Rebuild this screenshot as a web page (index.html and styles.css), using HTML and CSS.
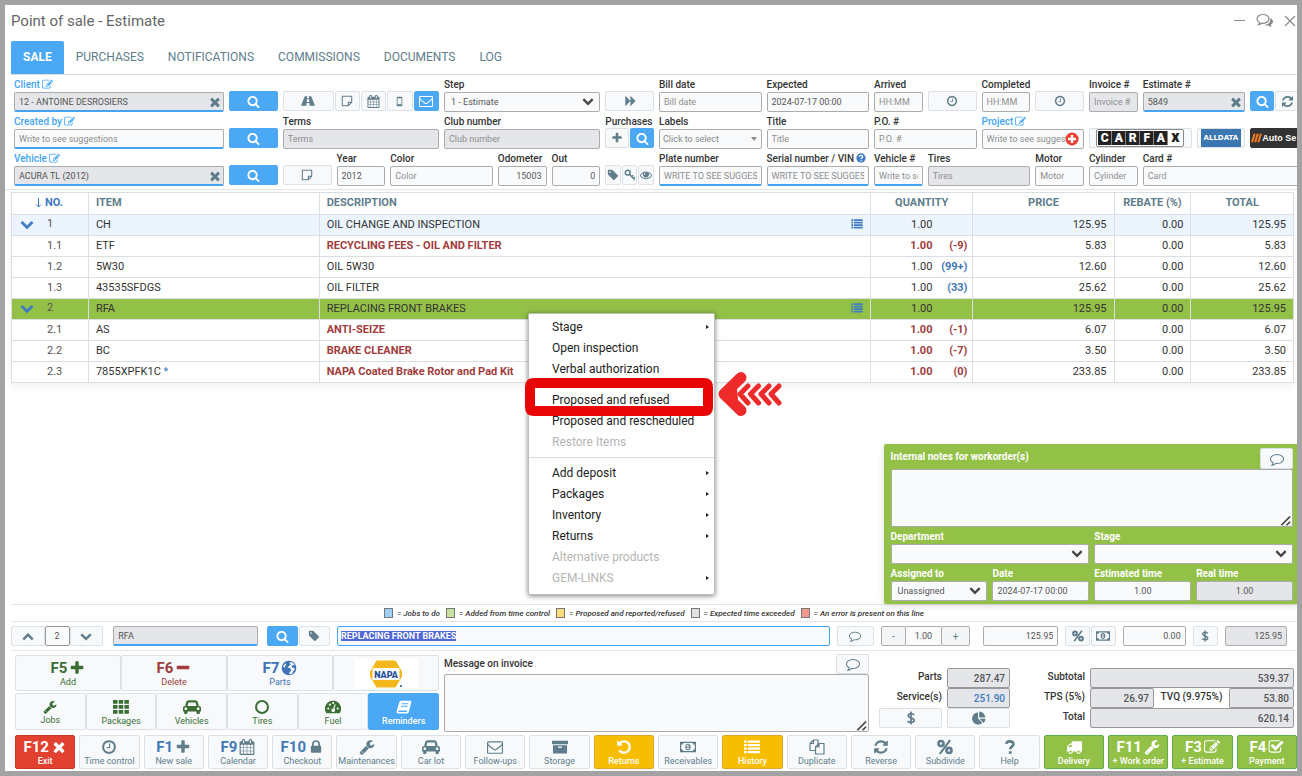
FILE: index.html
```html
<!DOCTYPE html>
<html lang="en">
<head>
<meta charset="utf-8">
<title>Point of sale - Estimate</title>
<link rel="stylesheet" href="styles.css">
</head>
<body>
<svg class="sprite" aria-hidden="true">
<symbol id="search" viewBox="0 0 1792 1792"><path d="M1216 832q0-185-131.5-316.5t-316.5-131.5-316.5 131.5-131.5 316.5 131.5 316.5 316.5 131.5 316.5-131.5 131.5-316.5zm512 832q0 52-38 90t-90 38q-54 0-90-38l-343-342q-179 124-399 124-143 0-273.5-55.5t-225-150-150-225-55.5-273.5 55.5-273.5 150-225 225-150 273.5-55.5 273.5 55.5 225 150 150 225 55.5 273.5q0 220-124 399l343 343q37 37 37 90z"/></symbol>
<symbol id="plus" viewBox="0 0 1792 1792"><path d="M1600 736v192q0 40-28 68t-68 28h-416v416q0 40-28 68t-68 28h-192q-40 0-68-28t-28-68v-416h-416q-40 0-68-28t-28-68v-192q0-40 28-68t68-28h416v-416q0-40 28-68t68-28h192q40 0 68 28t28 68v416h416q40 0 68 28t28 68z"/></symbol>
<symbol id="minus" viewBox="0 0 1792 1792"><path d="M1600 736v192q0 40-28 68t-68 28h-1216q-40 0-68-28t-28-68v-192q0-40 28-68t68-28h1216q40 0 68 28t28 68z"/></symbol>
<symbol id="times" viewBox="0 0 1792 1792"><path d="M1490 1322q0 40-28 68l-136 136q-28 28-68 28t-68-28l-294-294-294 294q-28 28-68 28t-68-28l-136-136q-28-28-28-68t28-68l294-294-294-294q-28-28-28-68t28-68l136-136q28-28 68-28t68 28l294 294 294-294q28-28 68-28t68 28l136 136q28 28 28 68t-28 68l-294 294 294 294q28 28 28 68z"/></symbol>
<symbol id="down" viewBox="0 0 1792 1792"><path d="M1683 808l-742 741q-19 19-45 19t-45-19l-742-741q-19-19-19-45.5t19-45.5l166-165q19-19 45-19t45 19l531 531 531-531q19-19 45-19t45 19l166 165q19 19 19 45.5t-19 45.5z"/></symbol>
<symbol id="up" viewBox="0 0 1792 1792"><path d="M1683 1331l-166 165q-19 19-45 19t-45-19l-531-531-531 531q-19 19-45 19t-45-19l-166-165q-19-19-19-45.5t19-45.5l742-741q19-19 45-19t45 19l742 741q19 19 19 45.5t-19 45.5z"/></symbol>
<symbol id="caret" viewBox="0 0 12 12"><path d="M2 3.500L6 7.500l4-4" fill="none" stroke="currentColor" stroke-width="2"/></symbol>
<symbol id="clock" viewBox="0 0 1792 1792"><path d="M1024 544v448q0 14-9 23t-23 9h-320q-14 0-23-9t-9-23v-64q0-14 9-23t23-9h224v-352q0-14 9-23t23-9h64q14 0 23 9t9 23zm416 352q0-148-73-273t-198-198-273-73-273 73-198 198-73 273 73 273 198 198 273 73 273-73 198-198 73-273zm224 0q0 209-103 385.500t-279.500 279.500-385.500 103-385.500-103-279.500-279.500-103-385.500 103-385.500 279.500-279.500 385.500-103 385.500 103 279.500 279.500 103 385.500z"/></symbol>
<symbol id="wrench" viewBox="0 0 1792 1792"><path d="M448 1472q0-26-19-45t-45-19-45 19-19 45 19 45 45 19 45-19 19-45zm644-420l-682 682q-37 37-90 37-52 0-91-37l-106-108q-38-36-38-90 0-53 38-91l681-681q39 98 114.500 173.500t173.500 114.500zm634-435q0 39-23 106-47 134-164.500 217.500t-258.500 83.500q-185 0-316.500-131.500t-131.500-316.500 131.500-316.500 316.500-131.500q58 0 121.500 16.500t107.500 46.500q16 11 16 28t-16 28l-293 169v224l193 107q5-3 79-48.500t135.500-81 70.500-35.500q15 0 23.500 10t8.500 25z"/></symbol>
<symbol id="grid" viewBox="0 0 16 14"><path d="M0 0h4.500v3.800H0zM5.700 0h4.500v3.800H5.700zM11.400 0h4.500v3.800h-4.500zM0 5h4.500v3.800H0zM5.700 5h4.500v3.800H5.700zM11.400 5h4.500v3.800h-4.500zM0 10h4.500v3.800H0zM5.700 10h4.500v3.800H5.700zM11.400 10h4.500v3.800h-4.500z"/></symbol>
<symbol id="lock" viewBox="0 0 1792 1792"><path d="M640 768h512v-192q0-106-75-181t-181-75-181 75-75 181v192zm832 96v576q0 40-28 68t-68 28h-960q-40 0-68-28t-28-68v-576q0-40 28-68t68-28h32v-192q0-184 132-316t316-132 316 132 132 316v192h32q40 0 68 28t28 68z"/></symbol>
<symbol id="mail" viewBox="0 0 1792 1792"><path d="M1664 1504v-768q-32 36-69 66-268 206-426 338-51 43-83 67t-86.500 48.500-102.500 24.500h-2q-48 0-102.500-24.500t-86.500-48.500-83-67q-158-132-426-338-37-30-69-66v768q0 13 9.500 22.500t22.500 9.500h1472q13 0 22.500-9.500t9.500-22.500zm0-1051v-24.500l-.500-13-3-12.500-5.500-9-9-7.500-14-2.500h-1472q-13 0-22.500 9.500t-9.500 22.500q0 168 147 284 193 152 401 317 6 5 35 29.500t46 37.500 44.500 31.500 50.500 27.500 43 9h2q20 0 43-9t50.500-27.500 44.500-31.500 46-37.500 35-29.500q208-165 401-317 54-43 100.500-115.500t46.500-131.500zm128-37v1088q0 66-47 113t-113 47h-1472q-66 0-113-47t-47-113v-1088q0-66 47-113t113-47h1472q66 0 113 47t47 113z"/></symbol>
<symbol id="refresh" viewBox="0 0 1792 1792"><path d="M1639 1056q0 5-1 7-64 268-268 434.500t-478 166.500q-146 0-282.500-55t-243.500-157l-129 129q-19 19-45 19t-45-19-19-45v-448q0-26 19-45t45-19h448q26 0 45 19t19 45-19 45l-137 137q71 66 161 102t187 36q134 0 250-65t186-179q11-17 53-117 8-23 30-23h192q13 0 22.500 9.500t9.500 22.500zm25-800v448q0 26-19 45t-45 19h-448q-26 0-45-19t-19-45 19-45l138-138q-148-137-349-137-134 0-250 65t-186 179q-11 17-53 117-8 23-30 23h-199q-13 0-22.500-9.500t-9.500-22.500v-7q65-268 270-434.500t480-166.500q146 0 284 55.500t245 156.500l130-129q19-19 45-19t45 19 19 45z"/></symbol>
<symbol id="undo" viewBox="0 0 1792 1792"><path d="M1664 896q0 156-61 298t-164 245-245 164-298 61q-172 0-327-72.500t-264-204.500q-7-10-6.500-22.500t8.500-20.500l137-138q10-9 25-9 16 2 23 12 73 95 179 147t225 52q104 0 198.500-40.500t163.500-109.500 109.500-163.500 40.500-198.500-40.500-198.500-109.500-163.500-163.500-109.500-198.500-40.500q-98 0-188 35.500t-160 101.500l137 138q31 30 14 69-17 40-59 40h-448q-26 0-45-19t-19-45v-448q0-42 40-59 39-17 69 14l130 129q107-101 244.500-156.500t284.500-55.500q156 0 298 61t245 164 164 245 61 298z"/></symbol>
<symbol id="edit" viewBox="0 0 1792 1792"><path d="M888 1184l116-116-152-152-116 116v56h96v96h56zm440-720q-16-16-33 1l-350 350q-17 17-1 33t33-1l350-350q17-17 1-33zm80 594v190q0 119-84.500 203.500t-203.500 84.500h-832q-119 0-203.500-84.500t-84.500-203.500v-832q0-119 84.500-203.500t203.500-84.500h832q63 0 117 25 15 7 18 23 3 17-9 29l-49 49q-14 14-32 8-23-6-45-6h-832q-66 0-113 47t-47 113v832q0 66 47 113t113 47h832q66 0 113-47t47-113v-126q0-13 9-22l64-64q15-15 35-7t20 29zm-96-738l288 288-672 672h-288v-288zm444 132l-92 92-288-288 92-92q28-28 68-28t68 28l152 152q28 28 28 68t-28 68z"/></symbol>
<symbol id="check" viewBox="0 0 1792 1792"><path d="M1472 930v318q0 119-84.500 203.500t-203.500 84.500h-832q-119 0-203.500-84.500t-84.500-203.500v-832q0-119 84.500-203.500t203.500-84.500h832q63 0 117 25 15 7 18 23 3 17-9 29l-49 49q-10 10-23 10-3 0-9-2-23-6-45-6h-832q-66 0-113 47t-47 113v832q0 66 47 113t113 47h832q66 0 113-47t47-113v-254q0-13 9-22l64-64q10-10 23-10 6 0 12 3 20 8 20 29zm231-489l-814 814q-24 24-57 24t-57-24l-430-430q-24-24-24-57t24-57l110-110q24-24 57-24t57 24l263 263 647-647q24-24 57-24t57 24l110 110q24 24 24 57t-24 57z"/></symbol>
<symbol id="tag" viewBox="0 0 1792 1792"><path d="M576 448q0-53-37.500-90.500t-90.500-37.500-90.500 37.500-37.500 90.500 37.500 90.500 90.500 37.500 90.500-37.500 37.500-90.500zm1067 576q0 53-37 90l-491 492q-39 37-91 37-53 0-90-37l-715-716q-38-37-64.500-101t-26.500-117v-416q0-52 38-90t90-38h416q53 0 117 26.500t102 64.500l715 714q37 39 37 91z"/></symbol>
<symbol id="truck" viewBox="0 0 1792 1792"><path d="M640 1408q0-52-38-90t-90-38-90 38-38 90 38 90 90 38 90-38 38-90zm-384-512h384v-256h-158q-13 0-22 9l-195 195q-9 9-9 22v30zm1280 512q0-52-38-90t-90-38-90 38-38 90 38 90 90 38 90-38 38-90zm256-1088v1024q0 15-4 26.500t-13.500 18.500-16.500 11.500-23.500 6-22.500 2-25.500 0-22.500-.500q0 106-75 181t-181 75-181-75-75-181h-384q0 106-75 181t-181 75-181-75-75-181h-64q-3 0-22.500.500t-25.500 0-22.500-2-23.500-6-16.500-11.500-13.500-18.500-4-26.500q0-26 19-45t45-19v-320q0-8-.500-35t0-38 2.500-34.500 6.500-37 14-30.500 22.500-30l198-198q19-19 50.500-32t58.500-13h160v-192q0-26 19-45t45-19h1024q26 0 45 19t19 45z"/></symbol>
<symbol id="car" viewBox="0 0 2048 1792"><path d="M480 1088q0-66-47-113t-113-47-113 47-47 113 47 113 113 47 113-47 47-113zm36-320h1016l-89-357q-2-8-14-17.500t-21-9.500h-768q-9 0-21 9.500t-14 17.500zm1372 320q0-66-47-113t-113-47-113 47-47 113 47 113 113 47 113-47 47-113zm160-96v384q0 14-9 23t-23 9h-96v128q0 80-56 136t-136 56-136-56-56-136v-128h-1024v128q0 80-56 136t-136 56-136-56-56-136v-128h-96q-14 0-23-9t-9-23v-384q0-93 65.500-158.500t158.500-65.500h28l105-419q23-94 104-157.500t179-63.500h768q98 0 179 63.500t104 157.500l105 419h28q93 0 158.500 65.500t65.500 158.500z"/></symbol>
<symbol id="eye" viewBox="0 0 1792 1792"><path d="M1664 960q-152-236-381-353 61 104 61 225 0 185-131.500 316.500t-316.500 131.500-316.500-131.500-131.500-316.500q0-121 61-225-229 117-381 353 133 205 333.500 326.500t434.500 121.500 434.500-121.500 333.500-326.500zm-720-384q0-20-14-34t-34-14q-125 0-214.500 89.500t-89.500 214.500q0 20 14 34t34 14 34-14 14-34q0-86 61-147t147-61q20 0 34-14t14-34zm848 384q0 34-20 69-140 230-376.500 368.500t-499.500 138.500-499.500-139-376.500-368q-20-35-20-69t20-69q140-229 376.500-368t499.500-139 499.500 139 376.500 368q20 35 20 69z"/></symbol>
<symbol id="comment" viewBox="0 0 1792 1792"><path d="M896 384q-204 0-381.500 69.500t-282 187.500-104.500 255q0 112 71.500 213.500t201.500 175.500l87 50-27 96q-24 91-70 172 152-63 275-171l43-38 57 6q69 8 130 8 204 0 381.500-69.500t282-187.500 104.500-255-104.500-255-282-187.500-381.500-69.500zm896 512q0 174-120 321.500t-326 233-450 85.500q-70 0-145-8-198 175-460 242-49 14-114 22h-5q-15 0-27-10.500t-16-27.500v-1q-3-4-.500-12t2-10 4.500-9.500l6-9 7-8.500 8-9q7-8 31-34.500t34.500-38 31-39.500 32.500-51 27-59 26-76q-157-89-247.500-220t-90.500-281q0-130 71-248.500t191-204.500 286-136.500 348-50.500 348 50.500 286 136.500 191 204.500 71 248.500z"/></symbol>
<symbol id="calendar" viewBox="0 0 1792 1792"><path d="M192 1664h288v-288h-288v288zm352 0h320v-288h-320v288zm-352-352h288v-320h-288v320zm352 0h320v-320h-320v320zm-352-384h288v-288h-288v288zm736 736h320v-288h-320v288zm-384-736h320v-288h-320v288zm768 736h288v-288h-288v288zm-384-352h320v-320h-320v320zm-352-864v-288q0-13-9.500-22.500t-22.500-9.500h-64q-13 0-22.500 9.500t-9.500 22.500v288q0 13 9.500 22.500t22.500 9.500h64q13 0 22.500-9.500t9.500-22.500zm736 864h288v-320h-288v320zm-384-384h320v-288h-320v288zm384 0h288v-288h-288v288zm32-480v-288q0-13-9.500-22.500t-22.500-9.500h-64q-13 0-22.500 9.500t-9.500 22.500v288q0 13 9.500 22.500t22.500 9.500h64q13 0 22.500-9.500t9.500-22.500zm384-64v1280q0 52-38 90t-90 38h-1408q-52 0-90-38t-38-90v-1280q0-52 38-90t90-38h128v-96q0-66 47-113t113-47h64q66 0 113 47t47 113v96h384v-96q0-66 47-113t113-47h64q66 0 113 47t47 113v96h128q52 0 90 38t38 90z"/></symbol>
<symbol id="road" viewBox="0 0 16 14"><path fill-rule="evenodd" d="M4.300 1.500H7l-.2 2.300h2.400L9 1.500h2.700L16 12.500H9.800l-.2-3.300H6.400l-.2 3.300H0zM6.700 5l-.2 3h3l-.2-3z"/></symbol>
<symbol id="note" viewBox="0 0 14 14"><path d="M1.500 1.500h11v7l-4 4h-7zM12.500 8.500h-4v4" fill="none" stroke="currentColor" stroke-width="1.200" stroke-linejoin="round"/></symbol>
<symbol id="phone" viewBox="0 0 14 14"><path fill-rule="evenodd" d="M4.500 1h5q1 0 1 1v10q0 1-1 1h-5q-1 0-1-1V2q0-1 1-1zM4.500 3v7.500h5V3z"/></symbol>
<symbol id="forward" viewBox="0 0 14 14"><path d="M1.500 1l6 6-6 6zM7.500 1l6 6-6 6z"/></symbol>
<symbol id="key" viewBox="0 0 14 14"><path d="M6 5.800l6.500 6.700M9 9l1.600-1.600M11 11l1.600-1.600" fill="none" stroke="currentColor" stroke-width="1.600"/><circle cx="4.300" cy="4.300" r="2.800" fill="none" stroke="currentColor" stroke-width="1.800"/></symbol>
<symbol id="comments" viewBox="0 0 18 16"><path d="M7 1.500c3.300 0 6 1.900 6 4.400s-2.700 4.400-6 4.400l-1.300-.1c-1 .9-2 1.300-3.200 1.500.6-.6 1-1.200 1.100-2.200C2 8.700 1 7.400 1 5.900c0-2.500 2.700-4.400 6-4.400z" fill="none" stroke="currentColor" stroke-width="1.200"/><path d="M14.200 5c1.700.8 2.800 2 2.800 3.500 0 1.400-.9 2.500-2.300 3.300.1 1 .5 1.600 1.200 2.200-1.400-.1-2.500-.6-3.500-1.500-1.500.2-2.700 0-4-.6 3.700-.2 6.600-2.600 5.800-6.900z"/></symbol>
<symbol id="money" viewBox="0 0 18 14"><path fill-rule="evenodd" d="M0 1h18v12H0zM3.800 2.500q0 2-2.400 2v5q2.400 0 2.400 2h10.400q0-2 2.400-2v-5q-2.400 0-2.400-2z"/><path fill-rule="evenodd" d="M9 3.300c2 0 3 1.700 3 3.700s-1 3.700-3 3.700S6 9 6 7s1-3.700 3-3.700zM8.400 4.600L7.300 5.700l.6.6.5-.4v2.500h-.8v.8h2.800v-.8h-.8V4.600z"/></symbol>
<symbol id="percent" viewBox="0 0 14 14"><path d="M11.500 1L2.500 13" stroke="currentColor" stroke-width="1.900"/><g fill="none" stroke="currentColor" stroke-width="2.300"><circle cx="3.500" cy="4" r="2.200"/><circle cx="10.500" cy="10" r="2.200"/></g></symbol>
<symbol id="dollar" viewBox="0 0 14 14"><path d="M10.300 3.800C8.500 2.300 4.200 2.200 4.200 4.700c0 2.800 6 1.700 6 4.600 0 2.600-4.500 2.500-6.600.9M7 .5v13" fill="none" stroke="currentColor" stroke-width="1.700"/></symbol>
<symbol id="pie" viewBox="0 0 14 14"><path d="M6 1.500V7.500L10.300 11.800A6 6 0 1 1 6 1.500zM7.200.5a6 6 0 0 1 6 6h-6zM7.500 7.700h6a6 6 0 0 1-1.800 4.200z"/></symbol>
<symbol id="globe" viewBox="0 0 14 14"><path fill-rule="evenodd" d="M7 .6a6.400 6.400 0 1 1 0 12.800A6.400 6.400 0 0 1 7 .6zM8.300 1.700L7.400 3l1.200.9L7 5.300 5.600 6.400l2.300.9 1.200 1.500-1.300 1.700-.9 2 2.800-.5 1-2.300 1.300-1.200-.4-1.600-1.900-.4-.6-1.300 1.700-.9 1.400.8L10.700 2.600zM3.800 2.900L2 5l.2 1.300 1.300.4-.3-1.300 1.400-1z"/></symbol>
<symbol id="gauge" viewBox="0 0 16 14"><path fill-rule="evenodd" d="M8 .8a8 8 0 0 1 6.700 12.400H1.300A8 8 0 0 1 8 .8zM2.200 8.500a1.100 1.100 0 1 0 2.200 0 1.100 1.100 0 0 0-2.200 0zM3.800 4.700a1.100 1.100 0 1 0 2.200 0 1.100 1.100 0 0 0-2.200 0zM11.600 8.500a1.100 1.100 0 1 0 2.200 0 1.100 1.100 0 0 0-2.200 0zM7 3a1.100 1.100 0 1 0 2.200 0A1.100 1.100 0 0 0 7 3zM9.700 4.200L8.200 8.400a1.900 1.900 0 1 0 1.200.4l1.400-4.200z"/></symbol>
<symbol id="book" viewBox="0 0 16 14"><path fill-rule="evenodd" d="M5 .8h9.500q1.200 0 .8 1.400L12.800 12q-.4 1.500-1.800 1.500H2.300C.8 13.500.2 12.300.6 11.200L3.400 2Q3.800.8 5 .8zM6 3.300l-.3 1h6.400l.3-1zM5.300 5.800l-.3 1h6.400l.3-1zM2.300 11.200q0 .9.8.9h7.600l.5-1.600H3.200q-.8 0-.9.700z"/></symbol>
<symbol id="archive" viewBox="0 0 16 14"><path fill-rule="evenodd" d="M0 .8h16v3.500H0zM1 5.300h14v8.200H1zM6 6.500v1.300h4V6.500z"/></symbol>
<symbol id="list" viewBox="0 0 16 14"><path d="M0 .5h2.700v2.300H0zM3.800.5H16v2.300H3.800zM0 4h2.700v2.300H0zM3.800 4H16v2.300H3.800zM0 7.500h2.700v2.300H0zM3.800 7.500H16v2.300H3.800zM0 11h2.700v2.300H0zM3.800 11H16v2.300H3.800z"/></symbol>
<symbol id="copy" viewBox="0 0 16 16"><g fill="none" stroke="currentColor" stroke-width="1.200" stroke-linejoin="round"><path d="M6.500 11.500H1v-7L4.500 1H9v4M4.500 1v3.500H1"/><path d="M10 4.500h5V15H6.500V8zM10 4.500V8H6.500"/></g></symbol>
<symbol id="help" viewBox="0 0 14 14"><path d="M3.800 4.300C4 1.200 10.200 1.300 10 4.600 9.900 6.700 7.200 6.500 7.200 9" fill="none" stroke="currentColor" stroke-width="2.300"/><path d="M6 10.700h2.400V13H6z"/></symbol>
<symbol id="ring" viewBox="0 0 14 14"><circle cx="7" cy="7" r="5.200" fill="none" stroke="currentColor" stroke-width="1.800"/></symbol>
<symbol id="grip" viewBox="0 0 12 12"><path d="M2 10.500L9.500 3M6.500 10.500L9.500 7.500" fill="none" stroke="#444" stroke-width="1.500"/></symbol>
</svg>

<main class="window">
  <header class="titlebar">
    <h1>Point of sale - Estimate</h1>
    <div class="window-tools">
      <button aria-label="Minimize"><svg width="12" height="12"><path d="M0 5.500h11" stroke="currentColor"/></svg></button>
      <button aria-label="Chat"><svg class="i i18"><use href="#comments"/></svg></button>
      <button aria-label="Close"><svg width="13" height="12"><path d="M1 1l10 10M11 1L1 11" stroke="currentColor" stroke-width="1.200"/></svg></button>
    </div>
  </header>
  <nav class="tabs">
    <a class="active" href="#sale">SALE</a><a href="#purchases">PURCHASES</a><a href="#notifications">NOTIFICATIONS</a><a href="#commissions">COMMISSIONS</a><a href="#documents">DOCUMENTS</a><a href="#log">LOG</a>
  </nav>

  <form class="details">
    <div class="field s4"><label class="link" for="client">Client <svg class="i i11"><use href="#edit"/></svg></label><div class="combo"><input class="off under" id="client" value="12 - ANTOINE DESROSIERS"><button type="button" aria-label="Clear client"><svg class="i i14"><use href="#times"/></svg></button></div></div>
    <button type="button" class="btn blue" aria-label="Search client"><svg class="i i13"><use href="#search"/></svg></button>
    <div class="group s3 tools">
      <button type="button" class="btn" aria-label="Road test"><svg class="i i14"><use href="#road"/></svg></button>
      <button type="button" class="btn" aria-label="Note"><svg class="i"><use href="#note"/></svg></button>
      <button type="button" class="btn" aria-label="Calendar"><svg class="i i13"><use href="#calendar"/></svg></button>
      <button type="button" class="btn" aria-label="Mobile"><svg class="i i11"><use href="#phone"/></svg></button>
      <button type="button" class="btn blue" aria-label="Email"><svg class="i i14"><use href="#mail"/></svg></button>
    </div>
    <div class="field s3"><label for="step">Step</label><div class="select"><select id="step"><option>1 - Estimate</option></select><svg class="i i14"><use href="#caret"/></svg></div></div>
    <button type="button" class="btn" aria-label="Next step"><svg class="i"><use href="#forward"/></svg></button>
    <div class="field s2"><label for="bill">Bill date</label><input id="bill" placeholder="Bill date"></div>
    <div class="field s2"><label for="expected">Expected</label><input id="expected" value="2024-07-17 00:00"></div>
    <div class="field"><label for="arrived">Arrived</label><input id="arrived" placeholder="HH:MM"></div>
    <button type="button" class="btn" aria-label="Set arrival"><svg class="i"><use href="#clock"/></svg></button>
    <div class="field"><label for="completed">Completed</label><input id="completed" placeholder="HH:MM"></div>
    <button type="button" class="btn" aria-label="Set completion"><svg class="i"><use href="#clock"/></svg></button>
    <div class="field"><label for="invoice">Invoice #</label><input class="off" id="invoice" placeholder="Invoice #"></div>
    <div class="field s2"><label for="estimate">Estimate #</label><div class="combo"><input class="off under" id="estimate" value="5849"><button type="button" aria-label="Clear estimate"><svg class="i i14"><use href="#times"/></svg></button></div></div>
    <div class="group two"><button type="button" class="btn blue" aria-label="Search estimate"><svg class="i i13"><use href="#search"/></svg></button><button type="button" class="btn" aria-label="Refresh"><svg class="i i13"><use href="#refresh"/></svg></button></div>

    <div class="field s4"><label class="link" for="creator">Created by <svg class="i i11"><use href="#edit"/></svg></label><input class="under" id="creator" placeholder="Write to see suggestions"></div>
    <button type="button" class="btn blue" aria-label="Search creator"><svg class="i i13"><use href="#search"/></svg></button>
    <div class="field s3"><label for="terms">Terms</label><input class="off" id="terms" placeholder="Terms"></div>
    <div class="field s3"><label for="club">Club number</label><input class="off" id="club" placeholder="Club number"></div>
    <div class="field"><span class="label">Purchases</span><div class="group two"><button type="button" class="btn" aria-label="Add purchase"><svg class="i"><use href="#plus"/></svg></button><button type="button" class="btn blue" aria-label="Search purchases"><svg class="i i13"><use href="#search"/></svg></button></div></div>
    <div class="field s2"><label for="labels">Labels</label><div class="select tiny"><select id="labels"><option>Click to select</option></select><svg class="i" viewBox="0 0 12 12"><path d="M3 4h6L6 8z" fill="#8b8b8b"/></svg></div></div>
    <div class="field s2"><label for="title">Title</label><input id="title" placeholder="Title"></div>
    <div class="field s2"><label for="po">P.O. #</label><input id="po" placeholder="P.O. #"></div>
    <div class="field s2"><label class="link" for="project">Project <svg class="i i11"><use href="#edit"/></svg></label><div class="combo project"><input id="project" placeholder="Write to see suggestions"><button type="button" aria-label="Add project"><svg class="i i14" viewBox="0 0 14 14"><circle cx="7" cy="7" r="6.500" fill="#e8412f"/><path d="M7 3v8M3 7h8" stroke="#fff" stroke-width="2.500"/></svg></button></div></div>
    <button type="button" class="btn s2 carfax" aria-label="CARFAX"><span class="plate"><span>C</span><span>A</span><span>R</span><span>F</span><span>A</span><span class="x">x</span></span></button>
    <button type="button" class="btn alldata"><span>ALLDATA</span></button>
    <button type="button" class="btn autose"><svg width="11" height="10" viewBox="0 0 13 10"><path d="M0 10L3 0h2.500l-3 10zM3.700 10l3-10h2.500l-3 10zM7.400 10l3-10h2.500l-3 10z" fill="#f47b20"/></svg>Auto Se</button>

    <div class="field s4"><label class="link" for="vehicle">Vehicle <svg class="i i11"><use href="#edit"/></svg></label><div class="combo"><input class="off under" id="vehicle" value="ACURA TL (2012)"><button type="button" aria-label="Clear vehicle"><svg class="i i14"><use href="#times"/></svg></button></div></div>
    <button type="button" class="btn blue" aria-label="Search vehicle"><svg class="i i13"><use href="#search"/></svg></button>
    <button type="button" class="btn" aria-label="Vehicle note"><svg class="i"><use href="#note"/></svg></button>
    <div class="field"><label for="year">Year</label><input id="year" value="2012"></div>
    <div class="field s2"><label for="color">Color</label><input id="color" placeholder="Color"></div>
    <div class="field"><label for="odo">Odometer</label><input class="num" id="odo" value="15003"></div>
    <div class="field"><label for="out">Out</label><input class="num" id="out" value="0"></div>
    <div class="group three"><button type="button" class="btn" aria-label="Tag"><svg class="i"><use href="#tag"/></svg></button><button type="button" class="btn" aria-label="Key"><svg class="i"><use href="#key"/></svg></button><button type="button" class="btn" aria-label="View"><svg class="i"><use href="#eye"/></svg></button></div>
    <div class="field s2"><label for="plate">Plate number</label><input class="under" id="plate" placeholder="WRITE TO SEE SUGGESTIONS"></div>
    <div class="field s2"><label for="vin">Serial number / VIN <svg class="i i10" viewBox="0 0 14 14"><circle cx="7" cy="7" r="6.500" fill="#3f7cc4"/><path d="M4.600 5.300C4.800 2.600 9.500 2.800 9.300 5.300 9.200 6.900 7.100 7 7.100 8.700M7.100 10v1.800" fill="none" stroke="#fff" stroke-width="1.800"/></svg></label><input class="under" id="vin" placeholder="WRITE TO SEE SUGGESTIONS"></div>
    <div class="field"><label for="vno">Vehicle #</label><input class="under" id="vno" placeholder="Write to see suggestions"></div>
    <div class="field s2"><label for="tires">Tires</label><input class="off" id="tires" placeholder="Tires"></div>
    <div class="field"><label for="motor">Motor</label><input id="motor" placeholder="Motor"></div>
    <div class="field"><label for="cyl">Cylinder</label><input id="cyl" placeholder="Cylinder"></div>
    <div class="field s3"><label for="card">Card #</label><input id="card" placeholder="Card"></div>
  </form>

  <section class="workspace">
    <table class="lines">
      <colgroup><col class="w6"><col class="w18"><col class="w43"><col class="w8"><col class="w11"><col class="w6"><col class="w8"></colgroup>
      <thead><tr><th class="no"><svg width="7" height="10" viewBox="0 0 7 10"><path d="M3.500 0v9M1 6.500l2.500 2.500L6 6.500" fill="none" stroke="currentColor"/></svg>NO.</th><th>ITEM</th><th>DESCRIPTION</th><th class="mid">QUANTITY</th><th class="mid">PRICE</th><th class="mid">REBATE (%)</th><th class="mid">TOTAL</th></tr></thead>
      <tbody>
      <tr class="job"><td class="no"><svg class="i i14"><use href="#down"/></svg>1</td><td>CH</td><td><div class="desc">OIL CHANGE AND INSPECTION<svg class="i"><use href="#list"/></svg></div></td><td class="qty"><b>1.00</b><i></i></td><td>125.95</td><td>0.00</td><td>125.95</td></tr>
      <tr><td class="no">1.1</td><td>ETF</td><td class="red">RECYCLING FEES - OIL AND FILTER</td><td class="qty red"><b>1.00</b><i>(-9)</i></td><td>5.83</td><td>0.00</td><td>5.83</td></tr>
      <tr><td class="no">1.2</td><td>5W30</td><td>OIL 5W30</td><td class="qty"><b>1.00</b><i>(99+)</i></td><td>12.60</td><td>0.00</td><td>12.60</td></tr>
      <tr><td class="no">1.3</td><td>43535SFDGS</td><td>OIL FILTER</td><td class="qty"><b>1.00</b><i>(33)</i></td><td>25.62</td><td>0.00</td><td>25.62</td></tr>
      <tr class="picked"><td class="no"><svg class="i i14"><use href="#down"/></svg>2</td><td>RFA</td><td><div class="desc">REPLACING FRONT BRAKES<svg class="i"><use href="#list"/></svg></div></td><td class="qty"><b>1.00</b><i></i></td><td>125.95</td><td>0.00</td><td>125.95</td></tr>
      <tr><td class="no">2.1</td><td>AS</td><td class="red">ANTI-SEIZE</td><td class="qty red"><b>1.00</b><i>(-1)</i></td><td>6.07</td><td>0.00</td><td>6.07</td></tr>
      <tr><td class="no">2.2</td><td>BC</td><td class="red">BRAKE CLEANER</td><td class="qty red"><b>1.00</b><i>(-7)</i></td><td>3.50</td><td>0.00</td><td>3.50</td></tr>
      <tr><td class="no">2.3</td><td>7855XPFK1C <span class="star">*</span></td><td class="red">NAPA Coated Brake Rotor and Pad Kit</td><td class="qty red"><b>1.00</b><i>(0)</i></td><td>233.85</td><td>0.00</td><td>233.85</td></tr>
      </tbody>
    </table>

    <form class="notes">
      <div class="notes-head"><label for="internal">Internal notes for workorder(s)</label><button type="button" class="btn" aria-label="Comment"><svg class="i i14"><use href="#comment"/></svg></button></div>
      <div class="area"><textarea id="internal"></textarea><svg class="i i14"><use href="#grip"/></svg></div>
      <div class="notes-grid">
        <div class="field s2"><label for="dept">Department</label><div class="select"><select id="dept"><option></option></select><svg class="i i14"><use href="#caret"/></svg></div></div>
        <div class="field s2"><label for="stage">Stage</label><div class="select"><select id="stage"><option></option></select><svg class="i i14"><use href="#caret"/></svg></div></div>
        <div class="field"><label for="assigned">Assigned to</label><div class="select"><select id="assigned"><option>Unassigned</option></select><svg class="i i14"><use href="#caret"/></svg></div></div>
        <div class="field"><label for="ndate">Date</label><input id="ndate" value="2024-07-17 00:00"></div>
        <div class="field"><label for="est">Estimated time</label><input class="center" id="est" value="1.00"></div>
        <div class="field"><label for="real">Real time</label><input class="center off" id="real" value="1.00"></div>
      </div>
    </form>

    <ul class="menu">
      <li class="more">Stage</li><li>Open inspection</li><li>Verbal authorization</li>
      <li class="sep"></li>
      <li>Proposed and refused</li><li>Proposed and rescheduled</li><li class="dim">Restore Items</li>
      <li class="sep"></li>
      <li class="more">Add deposit</li><li class="more">Packages</li><li class="more">Inventory</li><li class="more">Returns</li><li class="dim">Alternative products</li><li class="dim more">GEM-LINKS</li>
    </ul>
    <svg class="marker" viewBox="0 0 188 38" aria-hidden="true"><path fill="#e90606" fill-rule="evenodd" d="M9 0h170q9 0 9 9v20q0 9-9 9H9q-9 0-9-9V9q0-9 9-9zM10 10v18h168V10z"/></svg>
    <svg class="pointer" viewBox="0 0 64 44" aria-hidden="true"><g fill="none" stroke="#ee2a2a" stroke-linejoin="round" stroke-linecap="round"><path d="M23 5.500L6 22l17 16.500" stroke-width="11"/><path d="M30 14l-8 8 8 9M40.500 14l-8 8 8 9M51 14l-8 8 8 9M61 14l-8 8 8 9" stroke-width="5"/><path d="M15 18l-4 4 5 5z" fill="#ee2a2a" stroke-width="8"/></g></svg>
  </section>

  <div class="legend">
    <span><i class="jobs"></i>= Jobs to do</span><span><i class="added"></i>= Added from time control</span><span><i class="proposed"></i>= Proposed and reported/refused</span><span><i class="exceeded"></i>= Expected time exceeded</span><span><i class="error"></i>= An error is present on this line</span>
  </div>

  <form class="editor">
    <div class="nav"><button type="button" class="btn" aria-label="Previous line"><svg class="i"><use href="#up"/></svg></button><input class="center" aria-label="Line" value="2"><button type="button" class="btn" aria-label="Next line"><svg class="i"><use href="#down"/></svg></button></div>
    <input class="off under code" aria-label="Item" value="RFA">
    <div class="group two"><button type="button" class="btn blue" aria-label="Search item"><svg class="i i13"><use href="#search"/></svg></button><button type="button" class="btn" aria-label="Tag item"><svg class="i"><use href="#tag"/></svg></button></div>
    <div class="active-line" contenteditable="true" role="textbox" aria-label="Description"><mark>REPLACING FRONT BRAKES</mark></div>
    <button type="button" class="btn" aria-label="Comment line"><svg class="i"><use href="#comment"/></svg></button>
    <div class="stepper"><button type="button">-</button><input aria-label="Quantity" value="1.00"><button type="button">+</button></div>
    <input class="num" aria-label="Price" value="125.95">
    <div class="group two"><button type="button" class="btn" aria-label="Percent"><svg class="i"><use href="#percent"/></svg></button><button type="button" class="btn" aria-label="Money"><svg class="i i14"><use href="#money"/></svg></button></div>
    <input class="num" aria-label="Rebate" value="0.00">
    <button type="button" class="btn" aria-label="Dollar"><svg class="i"><use href="#dollar"/></svg></button>
    <input class="num off" aria-label="Line total" value="125.95">
  </form>

  <section class="dock">
    <div class="keys">
      <div class="keys-top">
        <button class="key green-ink"><strong>F5<svg class="i i16"><use href="#plus"/></svg></strong><span>Add</span></button>
        <button class="key red-ink"><strong>F6<svg class="i i16"><use href="#minus"/></svg></strong><span>Delete</span></button>
        <button class="key blue-ink"><strong>F7<svg class="i i16"><use href="#globe"/></svg></strong><span>Parts</span></button>
        <button class="key" aria-label="NAPA"><svg class="napa" viewBox="0 0 64 30"><rect width="64" height="30" fill="#fff"/><path d="M22.500 1.500h19l6.500 11v5l-6.500 11h-19l-6.500-11v-5z" fill="#f5b81c"/><path d="M18.500 9h27v12h-27z" fill="#fff"/><text x="32" y="19" text-anchor="middle">NAPA</text><circle cx="47" cy="27" r="1" fill="#244e9b"/></svg></button>
      </div>
      <div class="keys-mid">
        <button class="key green-ink"><svg class="i i14"><use href="#wrench"/></svg><span>Jobs</span></button>
        <button class="key green-ink"><svg class="i i16"><use href="#grid"/></svg><span>Packages</span></button>
        <button class="key green-ink"><svg class="i i18"><use href="#car"/></svg><span>Vehicles</span></button>
        <button class="key green-ink"><svg class="i i16"><use href="#ring"/></svg><span>Tires</span></button>
        <button class="key green-ink"><svg class="i i16"><use href="#gauge"/></svg><span>Fuel</span></button>
        <button class="key fill-blue"><svg class="i i16"><use href="#book"/></svg><span>Reminders</span></button>
      </div>
    </div>
    <div class="message">
      <div class="message-head"><label for="msg">Message on invoice</label><button type="button" class="btn" aria-label="Message comment"><svg class="i i14"><use href="#comment"/></svg></button></div>
      <div class="area"><textarea id="msg"></textarea><svg class="i i14"><use href="#grip"/></svg></div>
    </div>
    <div class="totals">
      <label for="parts">Parts</label><input class="off num" id="parts" value="287.47"><label for="sub">Subtotal</label><input class="off num span3" id="sub" value="539.37">
      <label for="serv">Service(s)</label><input class="off num serv" id="serv" value="251.90"><label for="tps">TPS (5%)</label><input class="off num" id="tps" value="26.97"><label class="tvq" for="tvq">TVQ (9.975%)</label><input class="off num" id="tvq" value="53.80">
      <button class="btn pay" aria-label="Payments"><svg class="i i14"><use href="#dollar"/></svg></button><button class="btn" aria-label="Breakdown"><svg class="i i14"><use href="#pie"/></svg></button><label for="total">Total</label><input class="off num span3" id="total" value="620.14">
    </div>
  </section>

  <footer class="actions">
    <button class="key fill-red"><strong>F12<svg class="i i16"><use href="#times"/></svg></strong><span>Exit</span></button>
    <button class="key"><svg class="i i16"><use href="#clock"/></svg><span>Time control</span></button>
    <button class="key"><strong><em>F1</em><svg class="i i16"><use href="#plus"/></svg></strong><span>New sale</span></button>
    <button class="key"><strong><em>F9</em><svg class="i i16"><use href="#calendar"/></svg></strong><span>Calendar</span></button>
    <button class="key"><strong><em>F10</em><svg class="i i16"><use href="#lock"/></svg></strong><span>Checkout</span></button>
    <button class="key"><svg class="i i16"><use href="#wrench"/></svg><span>Maintenances</span></button>
    <button class="key"><svg class="i i18"><use href="#car"/></svg><span>Car lot</span></button>
    <button class="key"><svg class="i i16"><use href="#mail"/></svg><span>Follow-ups</span></button>
    <button class="key"><svg class="i i16"><use href="#archive"/></svg><span>Storage</span></button>
    <button class="key fill-amber"><svg class="i i16"><use href="#undo"/></svg><span>Returns</span></button>
    <button class="key"><svg class="i i16"><use href="#money"/></svg><span>Receivables</span></button>
    <button class="key fill-amber"><svg class="i i16"><use href="#list"/></svg><span>History</span></button>
    <button class="key"><svg class="i i16"><use href="#copy"/></svg><span>Duplicate</span></button>
    <button class="key"><svg class="i i16"><use href="#refresh"/></svg><span>Reverse</span></button>
    <button class="key"><svg class="i i16"><use href="#percent"/></svg><span>Subdivide</span></button>
    <button class="key"><svg class="i i16"><use href="#help"/></svg><span>Help</span></button>
    <button class="key fill-green"><svg class="i i16"><use href="#truck"/></svg><span>Delivery</span></button>
    <button class="key fill-green"><strong>F11 <svg class="i i16"><use href="#wrench"/></svg></strong><span>+ Work order</span></button>
    <button class="key fill-green"><strong>F3<svg class="i i16"><use href="#edit"/></svg></strong><span>+ Estimate</span></button>
    <button class="key fill-green"><strong>F4<svg class="i i16"><use href="#check"/></svg></strong><span>Payment</span></button>
  </footer>
</main>
</body>
</html>
```
FILE: styles.css
```css
* { box-sizing: border-box; }
body {
  margin: 0;
  padding: 5px;
  background: #a3a3a3;
  font-family: Roboto, "Liberation Sans", sans-serif;
  font-size: 10px;
  color: #333;
}
.sprite { display: none; }
button, input, select, textarea { font: inherit; margin: 0; }
input, select, textarea { width: 100%; min-width: 0; }
.i { width: 12px; height: 12px; fill: currentColor; flex: none; display: block; }
.i10 { width: 10px; height: 10px; }
.i11 { width: 11px; height: 11px; }
.i13 { width: 13px; height: 13px; }
.i14 { width: 14px; height: 14px; }
.i16 { width: 16px; height: 16px; }
.i18 { width: 18px; height: 16px; }

.window {
  display: flex;
  flex-direction: column;
  min-height: calc(100vh - 10px);
  background: #fff;
  overflow: hidden;
}
.titlebar {
  display: flex;
  justify-content: space-between;
  align-items: center;
  height: 32px;
  margin-bottom: 4px;
  padding-left: 6px;
}
h1 { margin: 0; font-size: 15px; font-weight: 400; color: #666; }
.window-tools { display: flex; align-items: center; gap: 10px; color: #8a8a8a; }
.window-tools button { padding: 0; border: 0; background: none; color: inherit; display: flex; }

.tabs { display: flex; margin-left: 6px; border-bottom: 1px solid #dcdcdc; }
.tabs a {
  padding: 0 12px;
  line-height: 33px;
  font-size: 12px;
  color: #607d8b;
  text-decoration: none;
}
.tabs .active { background: #4aa8f5; color: #fff; font-weight: 700; border-radius: 2px 2px 0 0; }

.details {
  display: grid;
  grid-template-columns: repeat(24, minmax(0, 1fr));
  column-gap: 5px;
  row-gap: 2px;
  margin-right: -2px;
  padding: 2px 0 3px 9px;
  border-bottom: 1px solid #e6e6e6;
}
.details > .btn, .details .group { margin-bottom: 1px; }
.field .group { margin-top: -1px; }
.s2 { grid-column: span 2; }
.s3 { grid-column: span 3; }
.s4 { grid-column: span 4; }
.field { min-width: 0; }
.field > label, .label {
  display: flex;
  align-items: center;
  gap: 2px;
  height: 15px;
  padding-bottom: 1px;
  font-weight: 500;
  white-space: nowrap;
}
.field > .link { color: #42a5f5; }
input, select, textarea {
  display: block;
  height: 20px;
  padding: 0 4px;
  border: 1px solid #acacac;
  border-radius: 2px;
  background: #f9fafc;
  color: #555;
  font-size: 9px;
  outline: 0;
}
::placeholder { color: #8e8e8e; opacity: 1; }
.off { background: #e5e6ea; }
.under { border-bottom: 2px solid #42a5f5; }
.num { text-align: right; }
.center { text-align: center; }
select { appearance: none; padding-left: 6px; }
.select, .combo, .area { display: grid; align-items: center; }
.select > *, .combo > *, .area > * { grid-area: 1 / 1; }
.select > svg { justify-self: end; margin-right: 5px; pointer-events: none; color: #444; }
.tiny select { padding-left: 3px; color: #888; }
.tiny > svg { margin-right: 2px; }
.combo button { justify-self: end; padding: 0; margin-right: 2px; border: 0; background: none; color: #607d8b; }
.project button { margin-right: 5px; }
.area > svg { align-self: end; justify-self: end; pointer-events: none; }
textarea { resize: none; height: 58px; }

.btn {
  display: flex;
  align-items: center;
  justify-content: center;
  align-self: end;
  min-width: 0;
  height: 20px;
  padding: 0;
  border: 1px solid #dbe1e6;
  border-radius: 2px;
  background: #f7f9fb;
  color: #607d8b;
}
.blue { background: #4aa8f5; border-color: #4aa8f5; color: #fff; }
.group { display: grid; align-self: end; gap: 1px; }
.two { grid-template-columns: 1fr 1fr; }
.three { grid-template-columns: 1fr 1fr 1fr; }
.tools { grid-template-columns: 2fr 1fr 1fr 1fr 1fr; }

.plate { display: flex; padding: 1px; border: 1px solid #888; border-radius: 2px; background: #fff; }
.plate span {
  width: 14px;
  height: 14px;
  border-right: 1px solid #888;
  background: #222;
  color: #fff;
  font: 900 12px/14px Roboto, sans-serif;
}
.plate .x { border: 0; background: #fff; color: #222; font-size: 16px; line-height: 12px; }
.alldata span { padding: 0 3px; background: #3b76b0; color: #fff; font: 700 7px/18px "DejaVu Sans", sans-serif; }
.autose {
  justify-content: flex-start;
  background: #333;
  border-color: #333;
  color: #fff;
  font: 700 9px "Liberation Sans", sans-serif;
  white-space: nowrap;
}
.autose svg { flex: none; }

.workspace { position: relative; flex: 1; min-height: 406px; padding: 2px 3px 0 6px; }
.lines {
  width: 100%;
  table-layout: fixed;
  border-collapse: collapse;
  font-size: 11px;
  box-shadow: 0 3px 8px rgba(0, 0, 0, .06);
}
.w6 { width: 6%; }
.w8 { width: 8%; }
.w11 { width: 11%; }
.w18 { width: 18%; }
.w43 { width: 43%; }
.lines th, .lines td { height: 21px; padding: 0 7px 2px; border: 1px solid #dbdfe3; text-align: right; white-space: nowrap; }
.lines th { height: 22px; color: #607d8b; font-weight: 700; text-align: left; }
.lines .mid { text-align: center; }
.lines td:nth-child(2), .lines td:nth-child(3) { text-align: left; }
.lines .no { text-align: right; padding-right: 25px; color: #555; }
.lines th.no { color: #3f76c0; }
.lines th.no svg { margin-right: 3px; vertical-align: -2px; }
.no .i { float: left; color: #3f7cc4; margin-left: 1px; }
.lines td:first-child { text-align: left; padding-left: 35px; padding-right: 0; }
.lines td:first-child:has(svg) { padding-left: 7px; }
.lines td:first-child .i { margin-right: 13px; }
.desc { display: flex; justify-content: space-between; align-items: center; }
.desc .i { height: 10px; color: #3f7cc4; }
.job { background: #ecf5fe; }
.picked { background: #93c147; }
.qty b { font-weight: inherit; }
.qty i { display: inline-block; width: 35px; font-style: normal; font-weight: 700; color: #3f76b8; }
.lines .red, .red i { color: #a03c3c; font-weight: 700; }
.star { color: #3f7cc4; }
.lines .qty { padding-right: 5px; }

.notes {
  position: absolute;
  right: 0;
  bottom: 0;
  width: 32%;
  padding: 4px 4px 3px 7px;
  border-radius: 2px 0 0 2px;
  background: #93c147;
  color: #fff;
  box-shadow: 0 2px 6px rgba(0, 0, 0, .15);
}
.notes label { font-weight: 700; }
.notes-head { display: flex; justify-content: space-between; line-height: 18px; }
.notes-head .btn, .message-head .btn { width: 33px; height: 21px; }
.notes-grid { display: grid; grid-template-columns: repeat(4, minmax(0, 1fr)); gap: 2px 5px; padding-top: 2px; }

.menu {
  position: absolute;
  left: 523px;
  top: 123px;
  width: 187px;
  margin: 0;
  padding: 2px 0 6px;
  border: 1px solid #bebebe;
  border-radius: 2px;
  background: #fff;
  box-shadow: 0 1px 5px rgba(0, 0, 0, .5);
  list-style: none;
  font-size: 12px;
  color: #222;
}
.menu li { display: flex; justify-content: space-between; align-items: center; height: 21px; padding: 0 5px 0 23px; }
.menu .more::after { content: ""; border: 2px solid transparent; border-left: 3px solid #222; border-right: 0; }
.menu .dim { color: #b5b5b5; }
.menu .sep { height: 1px; margin: 5px 0 4px; padding: 0; background: #dcdcdc; }
.marker { position: absolute; left: 520px; top: 188px; width: 188px; height: 38px; }
.pointer { position: absolute; left: 713px; top: 182px; width: 64px; height: 44px; }

.legend {
  display: flex;
  justify-content: center;
  align-items: center;
  gap: 6px;
  height: 18px;
  margin-left: 6px;
  border-top: 1px solid #e6e6e6;
  border-bottom: 1px solid #e6e6e6;
  font-size: 8px;
  font-style: italic;
  font-weight: 500;
}
.legend span { display: flex; align-items: center; gap: 4px; }
.legend i { width: 9px; height: 10px; border: 1px solid #777; }
.jobs { background: #9fd0fb; }
.added { background: #c8e2a2; }
.proposed { background: #fbdd7c; }
.exceeded { background: #e2e2e2; }
.error { background: #f4978e; }

.editor {
  display: grid;
  grid-template-columns: 92fr 149fr 63fr 491fr 37fr 95fr 75fr 50fr 63fr 25fr 62fr;
  gap: 7px;
  margin-left: 6px;
  padding: 4px 10px 4px 0;
  border-bottom: 1px solid #e6e6e6;
}
.nav, .stepper { display: grid; grid-template-columns: 34fr 25fr 34fr; }
.nav input { border-color: #999; }
.code { width: auto; margin: 0 2px 0 3px; }
.active-line {
  height: 20px;
  padding: 0 3px;
  border: 1px solid #42a5f5;
  border-radius: 2px;
  background: #f9fafc;
  font-size: 9px;
  line-height: 18px;
  font-weight: 700;
  outline: 0;
}
mark { background: #5068d8; color: #fff; }
.stepper { grid-template-columns: 25fr 35fr 29fr; margin-right: 6px; }
.stepper button { height: 20px; padding: 0; border: 1px solid #acacac; border-radius: 2px; background: #f4f5f6; color: #607d8b; }
.stepper input { border-width: 1px 0; border-radius: 0; text-align: center; }

.dock {
  display: grid;
  grid-template-columns: repeat(3, minmax(0, 1fr));
  gap: 5px;
  margin-right: -2px;
  padding: 3px 0 3px 9px;
}
.keys { display: grid; gap: 2px; padding: 1px 0 0 1px; align-content: start; }
.keys-top { display: grid; grid-template-columns: repeat(4, 1fr); }
.keys-mid { display: grid; grid-template-columns: repeat(6, 1fr); }
.key {
  display: flex;
  flex-direction: column;
  align-items: center;
  justify-content: center;
  gap: 1px;
  min-width: 0;
  height: 34px;
  padding: 1px 0 0;
  border: 1px solid #dbe1e6;
  border-radius: 2px;
  background: #f7f9fb;
  color: #607d8b;
  font-size: 9px;
  line-height: 10px;
  white-space: nowrap;
}
.keys .key { height: 37px; }
.keys-top .key { height: 36px; }
.key strong { display: flex; align-items: center; gap: 2px; font-size: 15px; line-height: 16px; font-weight: 700; }
.key em { font-style: normal; color: #4479b8; }
.green-ink { color: #3b6e35; }
.red-ink { color: #a03c3c; }
.blue-ink { color: #3f72b5; }
.fill-blue { background: #4aa8f5; border-color: #4aa8f5; color: #fff; }
.fill-red { background: #e2412f; border-color: #c93a2b; color: #fff; }
.fill-amber { background: #f7be00; border-color: #e6a32e; color: #fff; }
.fill-green { background: #93c147; border-color: #5fae4b; color: #fff; }
.fill-red, .fill-amber, .fill-green, .fill-blue { font-weight: 500; }
.napa { width: 64px; height: 30px; }
.napa text { font: 900 9px Roboto, sans-serif; fill: #244e9b; }
.message-head { display: flex; justify-content: space-between; align-items: center; height: 20px; font-weight: 500; }
.message-head label { padding-bottom: 2px; }
.message-head .btn { height: 20px; }
.totals {
  display: grid;
  grid-template-columns: 68fr 63fr 70fr 64fr 65fr 65fr;
  grid-auto-rows: 20px;
  column-gap: 5px;
  align-content: start;
  padding: 14px 5px 0 0;
}
.totals label { text-align: right; line-height: 18px; font-weight: 500; white-space: nowrap; }
.totals input { font-size: 10px; font-weight: 500; border-color: #999; }
.totals .serv { color: #3f7cc4; }
.totals .tvq { text-align: center; }
.span3 { grid-column: span 3; }
.pay { margin-left: 5px; }

.actions {
  display: grid;
  grid-template-columns: repeat(20, minmax(0, 1fr));
  gap: 4px;
  padding: 0 0 2px 10px;
}
```
